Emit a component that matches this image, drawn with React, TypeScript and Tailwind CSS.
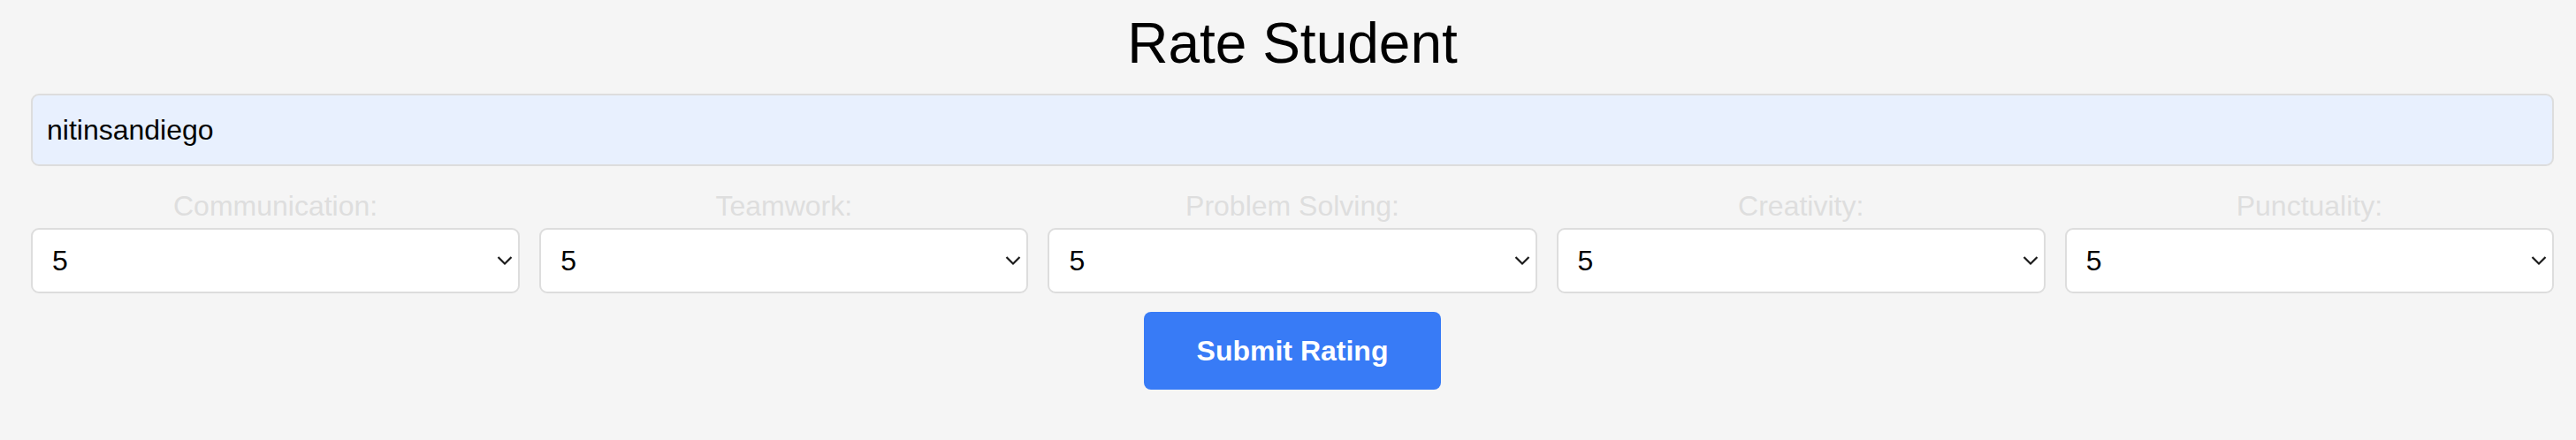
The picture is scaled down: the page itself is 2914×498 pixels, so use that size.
import { useState } from "react";

const skills = ["Communication", "Teamwork", "Problem Solving", "Creativity", "Punctuality"];

function Chevron() {
  return (
    <svg
      className="pointer-events-none absolute right-[8px] top-1/2 -translate-y-1/2"
      width="18"
      height="11"
      viewBox="0 0 18 11"
      fill="none"
    >
      <path d="M1.5 1.5 L9 9 L16.5 1.5" stroke="#1a1a1a" strokeWidth="2.2" />
    </svg>
  );
}

export default function App() {
  const [username, setUsername] = useState("nitinsandiego");
  const [ratings, setRatings] = useState<Record<string, string>>(
    Object.fromEntries(skills.map((s) => [s, "5"]))
  );

  return (
    <div className="min-h-screen bg-[#f5f5f5] pl-[35px] pr-[25px] pt-[13px] font-['Liberation_Sans',Arial,sans-serif] text-black">
      <h1 className="text-center text-[64px] leading-[72px] font-normal">Rate Student</h1>

      <input
        className="mt-[21px] block h-[82px] w-full rounded-[9px] border-2 border-[#dddddd] bg-[#e8f0fe] pl-[16px] text-[32px] outline-none"
        value={username}
        onChange={(e) => setUsername(e.target.value)}
      />

      <div className="mt-[27px] grid grid-cols-5 gap-x-[22px]">
        {skills.map((skill) => (
          <div key={skill} className="flex flex-col">
            <label className="text-center text-[32px] leading-[36px] text-[#dedede]">{skill}:</label>
            <div className="relative mt-[7px]">
              <select
                className="block h-[74px] w-full appearance-none rounded-[9px] border-2 border-[#dddddd] bg-white pl-[22px] text-[32px] outline-none"
                value={ratings[skill]}
                onChange={(e) => setRatings({ ...ratings, [skill]: e.target.value })}
              >
                {[1, 2, 3, 4, 5].map((n) => (
                  <option key={n} value={n}>
                    {n}
                  </option>
                ))}
              </select>
              <Chevron />
            </div>
          </div>
        ))}
      </div>

      <div className="mt-[21px] flex justify-center">
        <button className="h-[88px] w-[336px] rounded-[8px] bg-[#387bf6] text-[32px] font-bold text-white">
          Submit Rating
        </button>
      </div>
    </div>
  );
}
